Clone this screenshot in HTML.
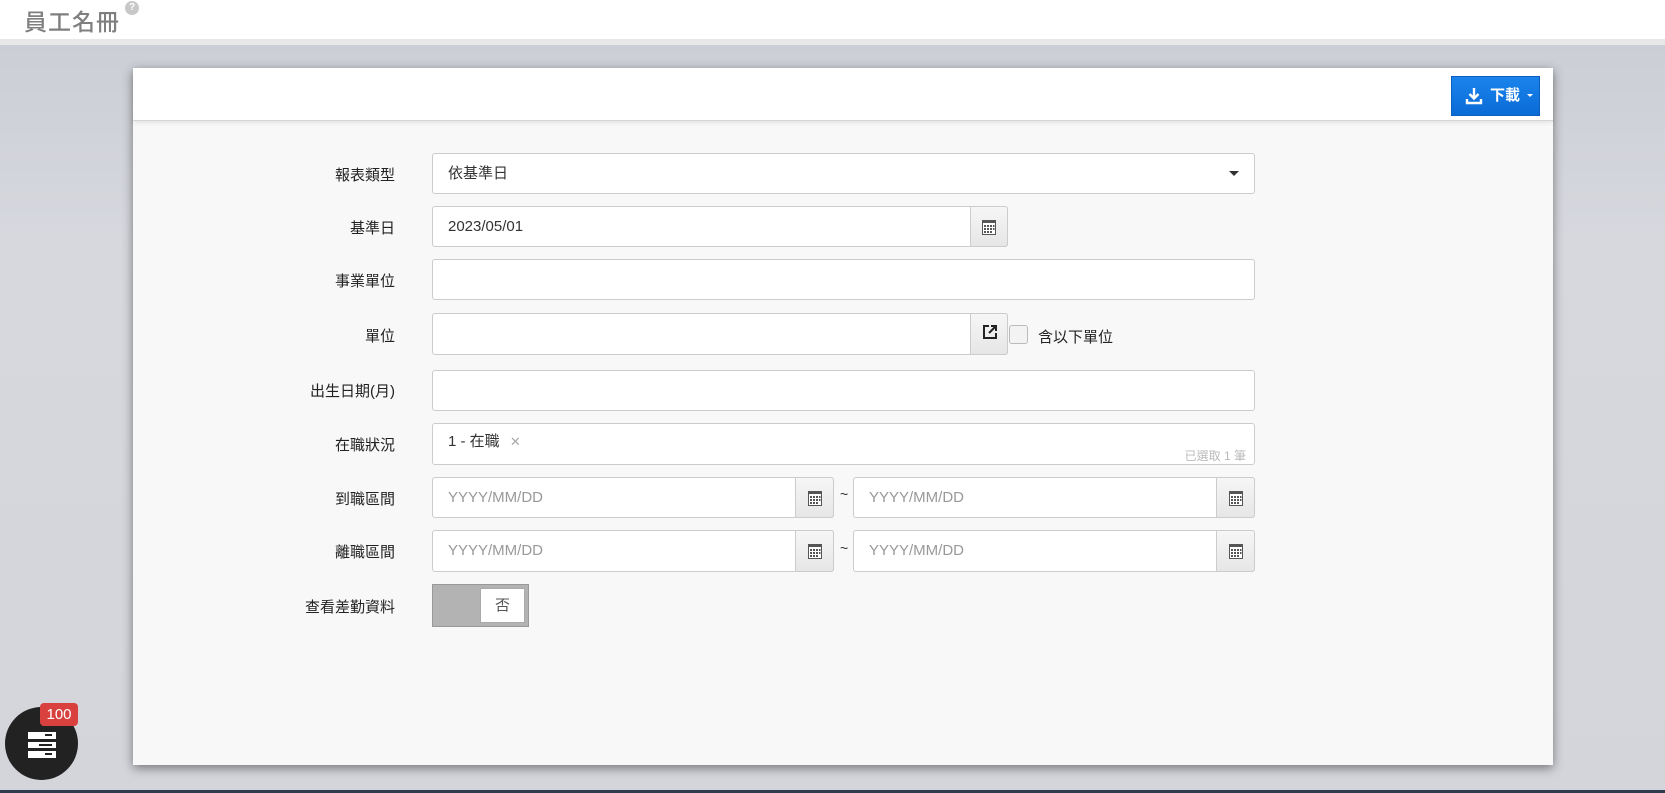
<!DOCTYPE html>
<html><head><meta charset="utf-8"><style>
*{box-sizing:border-box;margin:0;padding:0}
body{width:1665px;height:793px;overflow:hidden;position:relative;font-family:"Liberation Sans","Noto Sans CJK TC",sans-serif;font-size:15px;color:#333;background:linear-gradient(180deg,#c9ccd3 0%,#d6d8de 30%,#d3d5db 100%)}
.top{position:absolute;left:0;top:0;width:1665px;height:39px;background:#fff}
.strip{position:absolute;left:0;top:39px;width:1665px;height:6px;background:#e8e8e8}
.title{position:absolute;left:24px;top:3px;font-size:23px;color:#7f7f7f;letter-spacing:1px;font-weight:500}
.q{position:absolute;left:125px;top:1px;width:14px;height:14px;border-radius:50%;background:#c8c8c8;color:#fff;font-size:10px;font-weight:bold;text-align:center;line-height:14px}
.card{position:absolute;left:133px;top:68px;width:1420px;height:697px;background:#f8f8f8;box-shadow:0 3px 10px rgba(0,0,0,.45)}
.ch{position:absolute;left:0;top:0;width:1420px;height:53px;background:#fff;border-bottom:1px solid #d5d5d5;box-shadow:0 2px 4px rgba(0,0,0,.08)}
.btn{position:absolute;left:1318px;top:8px;width:89px;height:40px;background:linear-gradient(#1a84ec,#0b6bd6);border:1px solid #0a5fc0;color:#fff;font-weight:bold;font-size:15px;line-height:38px;padding-left:38px}
.btn svg{position:absolute;left:13px;top:10px}
.btn .c{position:absolute;left:75px;top:17px;border:3px solid transparent;border-top:3px solid #fff}
.lbl{position:absolute;width:200px;text-align:right;font-size:15px;color:#222}
.in{position:absolute;background:#fff;border:1px solid #ccc;border-radius:3px;font-size:15px;padding-left:15px;color:#333}
.ad{position:absolute;background:linear-gradient(#f6f6f6,#e6e6e6);border:1px solid #ccc;border-radius:0 3px 3px 0}
.ph{color:#999}
.cal{position:absolute;left:50%;top:50%;margin:-8px 0 0 -7px}
</style></head><body>
<div class="top"></div><div class="strip"></div>
<div class="title">員工名冊</div><div class="q">?</div>
<div class="card">
<div class="ch"><div class="btn"><svg width="18" height="18" viewBox="0 0 18 18"><path d="M9 1v10M4.5 7L9 11.5 13.5 7" stroke="#fff" stroke-width="2.4" fill="none"/><path d="M2 12v4h14v-4" stroke="#fff" stroke-width="2.4" fill="none"/></svg>下載<span class="c"></span></div></div>
</div>
<div class="lbl" style="left:195px;top:164px">報表類型</div>
<div class="in" style="left:432px;top:153px;width:823px;height:41px;line-height:39px">依基準日<span style="position:absolute;right:15px;top:17px;border:5px solid transparent;border-top:5px solid #333"></span></div>

<div class="lbl" style="left:195px;top:217px">基準日</div>
<div class="in" style="left:432px;top:206px;width:576px;height:41px;line-height:39px">2023/05/01</div>
<div class="ad" style="left:970px;top:206px;width:38px;height:41px"><svg class="cal" width="14" height="16" viewBox="0 0 14 16"><rect x="0.5" y="1.5" width="13" height="14" fill="#fff" stroke="#555"/><rect x="0" y="1" width="14" height="3" fill="#555"/><g fill="#555"><rect x="2" y="6" width="2" height="2"/><rect x="5" y="6" width="2" height="2"/><rect x="8" y="6" width="2" height="2"/><rect x="11" y="6" width="1.5" height="2"/><rect x="2" y="9" width="2" height="2"/><rect x="5" y="9" width="2" height="2"/><rect x="8" y="9" width="2" height="2"/><rect x="11" y="9" width="1.5" height="2"/><rect x="2" y="12" width="2" height="2"/><rect x="5" y="12" width="2" height="2"/><rect x="8" y="12" width="2" height="2"/></g></svg></div>

<div class="lbl" style="left:195px;top:270px">事業單位</div>
<div class="in" style="left:432px;top:259px;width:823px;height:41px"></div>

<div class="lbl" style="left:195px;top:325px">單位</div>
<div class="in" style="left:432px;top:313px;width:576px;height:42px"></div>
<div class="ad" style="left:970px;top:313px;width:38px;height:42px"><svg style="position:absolute;left:11px;top:10px" width="16" height="16" viewBox="0 0 16 16"><path d="M7 2H2v12h12V9" stroke="#222" stroke-width="2" fill="none"/><path d="M7 9l7-7M9 2h5v5" stroke="#222" stroke-width="2" fill="none"/></svg></div>
<div style="position:absolute;left:1009px;top:325px;width:19px;height:19px;border:1px solid #bbb;border-radius:3px;background:#f3f3f3"></div>
<div style="position:absolute;left:1038px;top:326px;font-size:15px;color:#222">含以下單位</div>

<div class="lbl" style="left:195px;top:380px">出生日期(月)</div>
<div class="in" style="left:432px;top:370px;width:823px;height:41px"></div>

<div class="lbl" style="left:195px;top:434px">在職狀況</div>
<div class="in" style="left:432px;top:423px;width:823px;height:42px;line-height:36px">1 - 在職 <span style="color:#aaa;font-size:13px;margin-left:6px">✕</span><span style="position:absolute;right:8px;bottom:1px;font-size:12px;color:#bbb;line-height:14px">已選取 1 筆</span></div>

<div class="lbl" style="left:195px;top:488px">到職區間</div>
<div class="in ph" style="left:432px;top:477px;width:402px;height:41px;line-height:39px">YYYY/MM/DD</div>
<div class="ad" style="left:795px;top:477px;width:39px;height:41px"><svg class="cal" width="14" height="16" viewBox="0 0 14 16"><rect x="0.5" y="1.5" width="13" height="14" fill="#fff" stroke="#555"/><rect x="0" y="1" width="14" height="3" fill="#555"/><g fill="#555"><rect x="2" y="6" width="2" height="2"/><rect x="5" y="6" width="2" height="2"/><rect x="8" y="6" width="2" height="2"/><rect x="11" y="6" width="1.5" height="2"/><rect x="2" y="9" width="2" height="2"/><rect x="5" y="9" width="2" height="2"/><rect x="8" y="9" width="2" height="2"/><rect x="11" y="9" width="1.5" height="2"/><rect x="2" y="12" width="2" height="2"/><rect x="5" y="12" width="2" height="2"/><rect x="8" y="12" width="2" height="2"/></g></svg></div>
<div style="position:absolute;left:840px;top:486px;font-size:14px">~</div>
<div class="in ph" style="left:853px;top:477px;width:402px;height:41px;line-height:39px">YYYY/MM/DD</div>
<div class="ad" style="left:1216px;top:477px;width:39px;height:41px"><svg class="cal" width="14" height="16" viewBox="0 0 14 16"><rect x="0.5" y="1.5" width="13" height="14" fill="#fff" stroke="#555"/><rect x="0" y="1" width="14" height="3" fill="#555"/><g fill="#555"><rect x="2" y="6" width="2" height="2"/><rect x="5" y="6" width="2" height="2"/><rect x="8" y="6" width="2" height="2"/><rect x="11" y="6" width="1.5" height="2"/><rect x="2" y="9" width="2" height="2"/><rect x="5" y="9" width="2" height="2"/><rect x="8" y="9" width="2" height="2"/><rect x="11" y="9" width="1.5" height="2"/><rect x="2" y="12" width="2" height="2"/><rect x="5" y="12" width="2" height="2"/><rect x="8" y="12" width="2" height="2"/></g></svg></div>

<div class="lbl" style="left:195px;top:541px">離職區間</div>
<div class="in ph" style="left:432px;top:530px;width:402px;height:42px;line-height:40px">YYYY/MM/DD</div>
<div class="ad" style="left:795px;top:530px;width:39px;height:42px"><svg class="cal" width="14" height="16" viewBox="0 0 14 16"><rect x="0.5" y="1.5" width="13" height="14" fill="#fff" stroke="#555"/><rect x="0" y="1" width="14" height="3" fill="#555"/><g fill="#555"><rect x="2" y="6" width="2" height="2"/><rect x="5" y="6" width="2" height="2"/><rect x="8" y="6" width="2" height="2"/><rect x="11" y="6" width="1.5" height="2"/><rect x="2" y="9" width="2" height="2"/><rect x="5" y="9" width="2" height="2"/><rect x="8" y="9" width="2" height="2"/><rect x="11" y="9" width="1.5" height="2"/><rect x="2" y="12" width="2" height="2"/><rect x="5" y="12" width="2" height="2"/><rect x="8" y="12" width="2" height="2"/></g></svg></div>
<div style="position:absolute;left:840px;top:540px;font-size:14px">~</div>
<div class="in ph" style="left:853px;top:530px;width:402px;height:42px;line-height:40px">YYYY/MM/DD</div>
<div class="ad" style="left:1216px;top:530px;width:39px;height:42px"><svg class="cal" width="14" height="16" viewBox="0 0 14 16"><rect x="0.5" y="1.5" width="13" height="14" fill="#fff" stroke="#555"/><rect x="0" y="1" width="14" height="3" fill="#555"/><g fill="#555"><rect x="2" y="6" width="2" height="2"/><rect x="5" y="6" width="2" height="2"/><rect x="8" y="6" width="2" height="2"/><rect x="11" y="6" width="1.5" height="2"/><rect x="2" y="9" width="2" height="2"/><rect x="5" y="9" width="2" height="2"/><rect x="8" y="9" width="2" height="2"/><rect x="11" y="9" width="1.5" height="2"/><rect x="2" y="12" width="2" height="2"/><rect x="5" y="12" width="2" height="2"/><rect x="8" y="12" width="2" height="2"/></g></svg></div>

<div class="lbl" style="left:195px;top:596px">查看差勤資料</div>
<div style="position:absolute;left:432px;top:584px;width:97px;height:43px;background:#b3b3b3;border:1px solid #999"><div style="position:absolute;left:47px;top:3px;width:45px;height:35px;background:#fff;border:1px solid #aaa;text-align:center;line-height:33px;font-size:15px;color:#555">否</div></div>

<div style="position:absolute;left:0;top:790px;width:1665px;height:3px;background:#2d3b4c"></div>
<div style="position:absolute;left:5px;top:707px;width:73px;height:73px;border-radius:50%;background:#222"><svg style="position:absolute;left:23px;top:25px" width="28" height="26" viewBox="0 0 28 26"><g fill="#fff"><rect x="0" y="0" width="28" height="7"/><rect x="0" y="10" width="28" height="6"/><rect x="0" y="19" width="28" height="7"/></g><g fill="#222"><rect x="17" y="2" width="7" height="2"/><rect x="11" y="12" width="13" height="2"/><rect x="17" y="21" width="7" height="2"/></g></svg></div>
<div style="position:absolute;left:40px;top:703px;width:38px;height:23px;background:#d9413e;border-radius:4px;color:#fff;font-size:15px;text-align:center;line-height:23px">100</div>
</body></html>
